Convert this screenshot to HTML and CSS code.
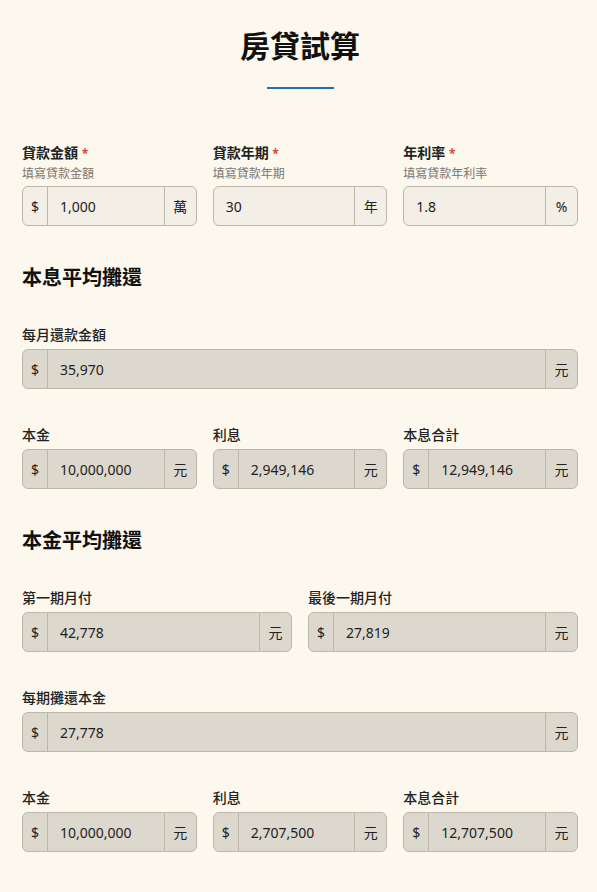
FILE: index.html
```html
<!DOCTYPE html>
<html lang="zh-Hant">
<head>
    <meta charset="utf-8">
    <title>房貸試算</title>
    <link rel="stylesheet" href="styles.css">
</head>
<body>
    <div class="page">
        <h1 class="titulo">房貸試算</h1>
        <div class="linha"></div>

        <div class="grupo tres entrada">
            <div class="campo">
                <label>貸款金額 <span class="req">*</span></label>
                <div class="dica">填寫貸款金額</div>
                <div class="caixa editavel">
                    <span class="pre">$</span><input class="valor" value="1,000"><span class="suf">萬</span>
                </div>
            </div>
            <div class="campo">
                <label>貸款年期 <span class="req">*</span></label>
                <div class="dica">填寫貸款年期</div>
                <div class="caixa editavel">
                    <input class="valor" value="30"><span class="suf">年</span>
                </div>
            </div>
            <div class="campo">
                <label>年利率 <span class="req">*</span></label>
                <div class="dica">填寫貸款年利率</div>
                <div class="caixa editavel">
                    <input class="valor" value="1.8"><span class="suf">%</span>
                </div>
            </div>
        </div>

        <h2 class="secao">本息平均攤還</h2>

        <div class="grupo">
            <div class="campo">
                <label>每月還款金額</label>
                <div class="caixa">
                    <span class="pre">$</span><input class="valor" value="35,970" readonly><span class="suf">元</span>
                </div>
            </div>
        </div>

        <div class="grupo tres">
            <div class="campo">
                <label>本金</label>
                <div class="caixa"><span class="pre">$</span><input class="valor" value="10,000,000" readonly><span class="suf">元</span></div>
            </div>
            <div class="campo">
                <label>利息</label>
                <div class="caixa"><span class="pre">$</span><input class="valor" value="2,949,146" readonly><span class="suf">元</span></div>
            </div>
            <div class="campo">
                <label>本息合計</label>
                <div class="caixa"><span class="pre">$</span><input class="valor" value="12,949,146" readonly><span class="suf">元</span></div>
            </div>
        </div>

        <h2 class="secao">本金平均攤還</h2>

        <div class="grupo dois">
            <div class="campo">
                <label>第一期月付</label>
                <div class="caixa"><span class="pre">$</span><input class="valor" value="42,778" readonly><span class="suf">元</span></div>
            </div>
            <div class="campo">
                <label>最後一期月付</label>
                <div class="caixa"><span class="pre">$</span><input class="valor" value="27,819" readonly><span class="suf">元</span></div>
            </div>
        </div>

        <div class="grupo">
            <div class="campo">
                <label>每期攤還本金</label>
                <div class="caixa"><span class="pre">$</span><input class="valor" value="27,778" readonly><span class="suf">元</span></div>
            </div>
        </div>

        <div class="grupo tres">
            <div class="campo">
                <label>本金</label>
                <div class="caixa"><span class="pre">$</span><input class="valor" value="10,000,000" readonly><span class="suf">元</span></div>
            </div>
            <div class="campo">
                <label>利息</label>
                <div class="caixa"><span class="pre">$</span><input class="valor" value="2,707,500" readonly><span class="suf">元</span></div>
            </div>
            <div class="campo">
                <label>本息合計</label>
                <div class="caixa"><span class="pre">$</span><input class="valor" value="12,707,500" readonly><span class="suf">元</span></div>
            </div>
        </div>
    </div>
</body>
</html>
```

FILE: styles.css
```css
body {
    margin: 0;
    background: #fcf8ee;
    color: #222;
    font-family: "Noto Sans", "Noto Sans CJK TC", sans-serif;
}

.page {
    padding: 0 19px 40px 22px;
}

.titulo {
    margin: 26px 0 0;
    font-size: 30px;
    line-height: 39px;
    font-weight: 700;
    text-align: center;
    color: #111;
}

.linha {
    width: 67px;
    height: 2px;
    margin: 22px auto 0;
    background: #1f6fb2;
}

.grupo {
    display: grid;
    grid-template-columns: minmax(0, 1fr);
    gap: 16px;
    margin-top: 36px;
}

.grupo.entrada {
    margin-top: 54px;
}

.grupo.tres {
    grid-template-columns: repeat(3, minmax(0, 1fr));
}

.grupo.dois {
    grid-template-columns: repeat(2, minmax(0, 1fr));
}

.secao + .grupo {
    margin-top: 33px;
}

.campo {
    min-width: 0;
}

.campo label {
    display: block;
    font-size: 14px;
    line-height: 20px;
    font-weight: 500;
    color: #222;
    margin-bottom: 4px;
}

.entrada .campo label {
    font-weight: 700;
    margin-bottom: 1px;
}

.req {
    color: #d9453a;
    font-size: 12px;
}

.dica {
    font-size: 12px;
    line-height: 18px;
    color: #7a7670;
    margin-bottom: 3px;
}

.caixa {
    display: flex;
    height: 40px;
    box-sizing: border-box;
    border: 1px solid #bcb6ab;
    border-radius: 6px;
    background: #ddd8ce;
    overflow: hidden;
}

.caixa.editavel {
    background: #f3efe6;
}

.pre, .suf {
    flex: none;
    display: flex;
    align-items: center;
    justify-content: center;
    font-size: 14px;
    color: #222;
}

.pre {
    width: 24px;
    border-right: 1px solid #bcb6ab;
}

.suf {
    width: 31px;
    border-left: 1px solid #bcb6ab;
}

.valor {
    flex: 1;
    width: 0;
    min-width: 0;
    border: 0;
    background: transparent;
    padding: 0 0 0 12px;
    font-family: "Noto Sans", "Noto Sans CJK TC", sans-serif;
    font-size: 14px;
    color: #222;
    outline: none;
}

.secao {
    margin: 38px 0 0;
    font-size: 20px;
    line-height: 28px;
    font-weight: 700;
    color: #111;
}
```
